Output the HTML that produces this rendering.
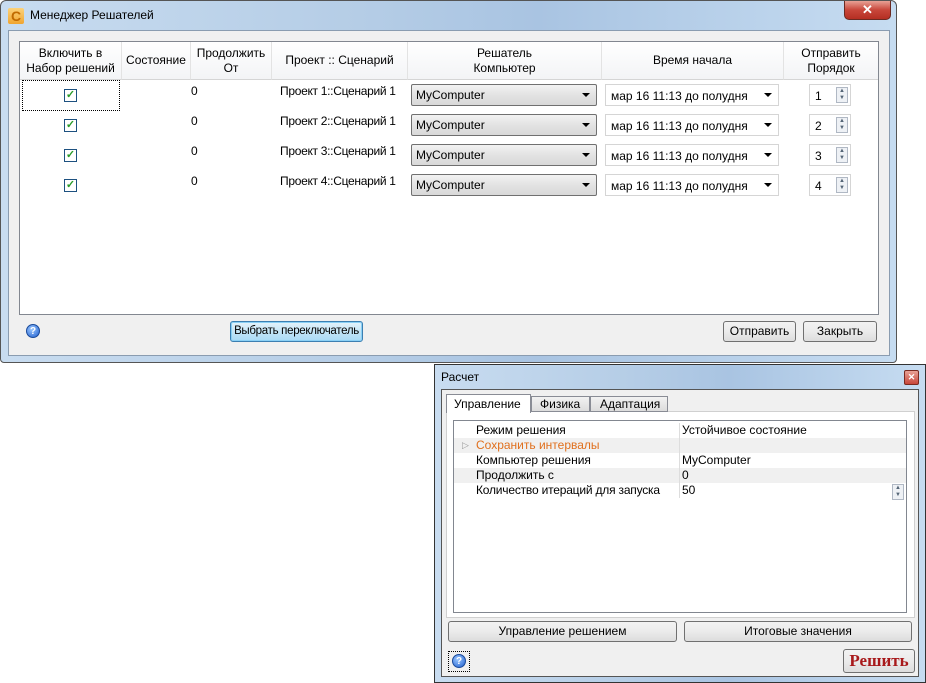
<!DOCTYPE html>
<html><head><meta charset="utf-8"><style>
*{box-sizing:border-box;margin:0;padding:0;white-space:nowrap}
body{width:926px;height:683px;background:#fff;position:relative;overflow:hidden;font-family:"Liberation Sans",sans-serif;font-size:12px;color:#000}
.a{position:absolute}
.win1{left:0;top:0;width:897px;height:363px;border:1px solid #555;border-radius:6px 6px 4px 4px;background:linear-gradient(90deg,#c8dcf0,#b5cde6 40%,#a9c4e2 60%,#c6dcf1);}
.in1{left:7px;top:29px;width:882px;height:326px;background:#f0f0f0;border:1px solid #8a9cb0}
.tbl{left:19px;top:41px;width:860px;height:274px;background:#fff;border:1px solid #828790}
.hd{top:0;height:38px;background:linear-gradient(#fff,#f3f4f6);border-bottom:1px solid #d5d5d5;text-align:center;font-size:12px;line-height:15px;display:flex;align-items:center;justify-content:center;border-right:1px solid #e3e3e3}
.cb{width:13px;height:13px;border:1px solid #1d5180;background:#fff;color:#2a9b2a;font-size:11px;line-height:11px;text-align:center;font-weight:bold}
.combo{width:186px;height:22px;border:1px solid #707070;border-radius:2px;background:linear-gradient(#f2f2f2,#e3e3e3 50%,#d9d9d9);padding:3px 4px;font-size:12px}
.date{width:174px;height:22px;border:1px solid #d5d5d5;background:#fff;padding:4px 5px;font-size:12px}
.arr{position:absolute;right:6px;top:8px;width:0;height:0;border-left:4px solid transparent;border-right:4px solid transparent;border-top:4px solid #000}
.spin{width:42px;height:22px;border:1px solid #d5d5d5;background:#fff;padding:4px 5px}
.sp{position:absolute;right:2px;top:2px;width:12px;height:16px;border:1px solid #b0b8c4;background:#eef1f5;font-size:6px;color:#567;text-align:center;line-height:7px}
.btn{border:1px solid #707070;border-radius:3px;background:linear-gradient(#f2f2f2,#ebebeb 50%,#dddddd);text-align:center;font-size:12px}
.help{width:14px;height:14px;border-radius:50%;background:radial-gradient(circle at 40% 35%,#9cc8ff,#1f5fcf);color:#fff;font-size:10px;font-weight:bold;text-align:center;line-height:14px;border:1px solid #1a4a9a}
.win2{left:434px;top:364px;width:492px;height:319px;border:1px solid #333;background:linear-gradient(90deg,#c8dcf0,#b5cde6 40%,#a9c4e2 60%,#c6dcf1)}
.row{left:0;width:452px;height:15px;line-height:15px;font-size:12px}
</style></head><body>
<div class="a win1">
 <div class="a" style="left:7px;top:7px;width:16px;height:16px;background:linear-gradient(#fcd27a,#f0a530);border-radius:2px;color:#c06a00;font-weight:bold;font-size:14px;line-height:16px;text-align:center">C</div>
 <div class="a" style="left:29px;top:7px;font-size:12px">Менеджер Решателей</div>
 <div class="a" style="left:843px;top:0;width:47px;height:19px;border:1px solid #6b2a22;border-top:none;border-radius:0 0 5px 5px;background:linear-gradient(#e8a195,#c8463a 50%,#b52e22);color:#fff;text-align:center;font-weight:bold;font-size:13px;line-height:17px">✕</div>
 <div class="a in1"></div>
</div>
<div class="a tbl">
 <div class="a hd" style="left:0;width:102px">Включить в<br>Набор решений</div>
 <div class="a hd" style="left:102px;width:69px">Состояние</div>
 <div class="a hd" style="left:171px;width:81px">Продолжить<br>От</div>
 <div class="a hd" style="left:252px;width:136px">Проект :: Сценарий</div>
 <div class="a hd" style="left:388px;width:194px">Решатель<br>Компьютер</div>
 <div class="a hd" style="left:582px;width:182px">Время начала</div>
 <div class="a hd" style="left:764px;width:94px;border-right:none">Отправить<br>Порядок</div>
 <div class="a" style="left:2px;top:38px;width:98px;height:31px;border:1px dotted #000"></div>
</div>
<div class="a cb" style="left:64px;top:89px">✓</div>
<div class="a cb" style="left:64px;top:119px">✓</div>
<div class="a cb" style="left:64px;top:149px">✓</div>
<div class="a cb" style="left:64px;top:179px">✓</div>
<div class="a" style="left:191px;top:84px">0</div><div class="a" style="left:191px;top:114px">0</div><div class="a" style="left:191px;top:144px">0</div><div class="a" style="left:191px;top:174px">0</div>
<div class="a" style="left:280px;top:84px;letter-spacing:-0.3px">Проект 1::Сценарий 1</div>
<div class="a" style="left:280px;top:114px;letter-spacing:-0.3px">Проект 2::Сценарий 1</div>
<div class="a" style="left:280px;top:144px;letter-spacing:-0.3px">Проект 3::Сценарий 1</div>
<div class="a" style="left:280px;top:174px;letter-spacing:-0.3px">Проект 4::Сценарий 1</div>
<div class="a combo" style="left:411px;top:84px">MyComputer<span class="arr"></span></div>
<div class="a combo" style="left:411px;top:114px">MyComputer<span class="arr"></span></div>
<div class="a combo" style="left:411px;top:144px">MyComputer<span class="arr"></span></div>
<div class="a combo" style="left:411px;top:174px">MyComputer<span class="arr"></span></div>
<div class="a date" style="left:605px;top:84px">мар 16 11:13 до полудня<span class="arr"></span></div>
<div class="a date" style="left:605px;top:114px">мар 16 11:13 до полудня<span class="arr"></span></div>
<div class="a date" style="left:605px;top:144px">мар 16 11:13 до полудня<span class="arr"></span></div>
<div class="a date" style="left:605px;top:174px">мар 16 11:13 до полудня<span class="arr"></span></div>
<div class="a spin" style="left:809px;top:84px">1<span class="sp">▲<br>▼</span></div>
<div class="a spin" style="left:809px;top:114px">2<span class="sp">▲<br>▼</span></div>
<div class="a spin" style="left:809px;top:144px">3<span class="sp">▲<br>▼</span></div>
<div class="a spin" style="left:809px;top:174px">4<span class="sp">▲<br>▼</span></div>
<div class="a help" style="left:26px;top:324px">?</div>
<div class="a btn" style="left:230px;top:321px;width:133px;height:21px;line-height:19px;font-size:11.5px;letter-spacing:-0.3px;border-color:#3c7fb1;background:linear-gradient(#e5f4fc,#c4e5f6 50%,#a9daf6);box-shadow:0 0 0 1px #8ad0f5 inset">Выбрать переключатель</div>
<div class="a btn" style="left:723px;top:321px;width:73px;height:21px;line-height:19px">Отправить</div>
<div class="a btn" style="left:803px;top:321px;width:74px;height:21px;line-height:19px">Закрыть</div>

<div class="a win2">
 <div class="a" style="left:6px;top:5px">Расчет</div>
 <div class="a" style="left:469px;top:5px;width:15px;height:15px;border:1px solid #7a2a20;border-radius:2px;background:linear-gradient(#e8a195,#c8463a);color:#fff;font-size:9px;text-align:center;line-height:13px;font-weight:bold">✕</div>
 <div class="a" style="left:6px;top:24px;width:478px;height:288px;background:#f0f0f0;border:1px solid #555"></div>
 <div class="a" style="left:11px;top:46px;width:469px;height:207px;border:1px solid #d0d0d0;background:#fff"></div>
 <div class="a" style="left:11px;top:29px;width:85px;height:19px;background:#fff;border:1px solid #898c95;border-bottom:none;padding:3px 7px;line-height:13px">Управление</div>
 <div class="a" style="left:96px;top:31px;width:59px;height:16px;background:linear-gradient(#f2f2f2,#dcdcdc);border:1px solid #898c95;padding:0 8px;line-height:15px">Физика</div>
 <div class="a" style="left:155px;top:31px;width:78px;height:16px;background:linear-gradient(#f2f2f2,#dcdcdc);border:1px solid #898c95;padding:0 9px;line-height:15px">Адаптация</div>
 <div class="a" style="left:18px;top:55px;width:454px;height:193px;border:1px solid #828790;background:#fff">
  <div class="a row" style="top:2px"><span class="a" style="left:22px">Режим решения</span><span class="a" style="left:228px">Устойчивое состояние</span></div>
  <div class="a row" style="top:17px;background:#f0f0f0"><span class="a" style="left:8px;color:#999;font-size:9px">▷</span><span class="a" style="left:22px;color:#e0701e">Сохранить интервалы</span></div>
  <div class="a row" style="top:32px"><span class="a" style="left:22px">Компьютер решения</span><span class="a" style="left:228px">MyComputer</span></div>
  <div class="a row" style="top:47px;background:#f0f0f0"><span class="a" style="left:22px">Продолжить с</span><span class="a" style="left:228px">0</span></div>
  <div class="a row" style="top:62px"><span class="a" style="left:22px;letter-spacing:-0.2px">Количество итераций для запуска</span><span class="a" style="left:228px">50</span><span class="sp" style="top:1px;right:2px">▲<br>▼</span></div>
  <div class="a" style="left:225px;top:2px;width:1px;height:75px;background:#ddd"></div>
 </div>
 <div class="a btn" style="left:13px;top:256px;width:229px;height:21px;line-height:19px">Управление решением</div>
 <div class="a btn" style="left:249px;top:256px;width:228px;height:21px;line-height:19px">Итоговые значения</div>
 <div class="a" style="left:13px;top:286px;width:22px;height:21px;border:1px dotted #000"></div>
 <div class="a help" style="left:17px;top:289px">?</div>
 <div class="a btn" style="left:408px;top:284px;width:72px;height:24px;line-height:22px;color:#a8191b;font-weight:bold;font-size:17px;font-family:'Liberation Serif',serif">Решить</div>
</div>
</body></html>
